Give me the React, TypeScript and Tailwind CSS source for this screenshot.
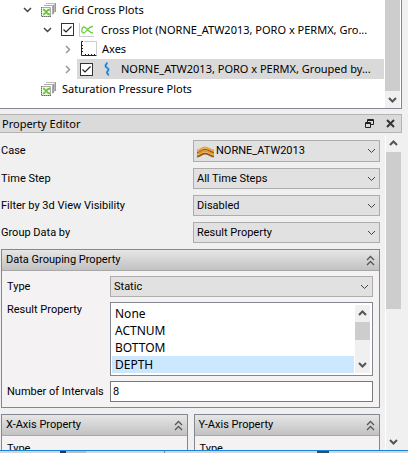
import type { ReactNode } from 'react';

type Dir = 'up' | 'down' | 'right';

function Chevron({ dir, className = '' }: { dir: Dir; className?: string }) {
  const d = dir === 'up' ? 'M1 6 L4.5 2.5 L8 6' : dir === 'down' ? 'M1 3 L4.5 6.5 L8 3' : 'M3 1 L6.5 4.5 L3 8';
  return (
    <svg viewBox="0 0 9 9" className={`h-[9px] w-[9px] shrink-0 ${className}`} fill="none" stroke="currentColor" aria-hidden="true">
      <path d={d} />
    </svg>
  );
}

function PlotsIcon() {
  return (
    <svg viewBox="0 0 16 16" className="h-4 w-4 shrink-0" fill="none" aria-hidden="true">
      <path d="M5 1.500h8.500v9" stroke="#bbb" />
      <path d="M14.500 1v9" stroke="#999" />
      <path d="M3 3.500h8.500v9" stroke="#aaa" />
      <path d="M12.500 3v9" stroke="#999" />
      <path d="M.5 5.500h9v9h-9z" fill="#f2faee" stroke="#aaa" />
      <path d="M.5 5v10M1 14.500h9" stroke="#666" strokeDasharray="1 1" />
      <path d="M2 7.500c3 0 3 5 7 5M2 12.500c3 0 3-5 7-5" stroke="#6cc832" strokeWidth="1.800" />
    </svg>
  );
}

function CrossPlotIcon() {
  return (
    <svg viewBox="0 0 16 16" className="h-4 w-4 shrink-0" fill="none" aria-hidden="true">
      <path d="M.5 1v13.500H15" stroke="#ccc" />
      <path d="M14 4.500C9 4.500 7 11 4.500 11S2.500 5 5 5s5 6 9 6" stroke="#6fce45" strokeWidth="1.300" />
    </svg>
  );
}

function AxesIcon() {
  return (
    <svg viewBox="0 0 16 16" className="h-4 w-4 shrink-0" fill="none" aria-hidden="true">
      <path d="M3 .5h12.500v13" stroke="#ccc" />
      <path d="M2 .5H.5v14h15M1 4.500h1M1 7.500h1M1 10.500h1M4.500 14v-1M7.500 14v-1M10.500 14v-1M13.500 14v-1" stroke="#222" />
    </svg>
  );
}

function CurveIcon() {
  return (
    <svg viewBox="0 0 16 16" className="h-4 w-4 shrink-0" fill="none" aria-hidden="true">
      <path d="M7 1.500c0 2-1.500 2-1.500 3.500S8.500 7 8.500 8.500 7 10 7 11.500s2 1.500 1 3" stroke="#a3cdf0" strokeWidth="3" />
      <path d="M7 1.500c0 2-1.500 2-1.500 3.500S8.500 7 8.500 8.500 7 10 7 11.500s2 1.500 1 3" stroke="#1c79c0" strokeWidth="1.500" />
    </svg>
  );
}

function CaseIcon() {
  return (
    <svg viewBox="0 0 17 12" className="h-3 w-[17px]" fill="none" aria-hidden="true">
      <path d="M0 4.500C4 4.500 4 1.500 8 1.500s5 3 9 3" stroke="#e8a33a" strokeWidth="2" />
      <path d="M0 6.500C4 6.500 4 3.500 8 3.500s5 3 9 3" stroke="#9c5c10" strokeWidth="1.500" />
      <path d="M0 8C4 8 4 5 8 5s5 3 9 3" stroke="#f0941c" strokeWidth="2" />
      <path d="M0 10.500C4 10.500 4 7.500 8 7.500s5 3 9 3" stroke="#965a12" strokeWidth="2" />
    </svg>
  );
}

function Tick({ label }: { label: string }) {
  return (
    <span className="relative flex h-[13px] w-[13px] shrink-0">
      <input type="checkbox" defaultChecked aria-label={label} className="peer h-[13px] w-[13px] appearance-none border border-[#333] bg-white" />
      <svg viewBox="0 0 13 13" className="pointer-events-none invisible absolute inset-0 peer-checked:visible" fill="none" stroke="#222" strokeWidth="1.200" aria-hidden="true">
        <path d="M2.500 6.500l2.500 2.500 5.500-5.500" />
      </svg>
    </span>
  );
}

function Combo({ id, options, icon }: { id: string; options: string[]; icon?: ReactNode }) {
  return (
    <div className="relative flex min-w-0 flex-1">
      {icon && <span className="pointer-events-none absolute top-[6px] left-[4px]">{icon}</span>}
      <select id={id} className={`w-full appearance-none border border-[#adadad] bg-[#e1e1e1] pr-6 ${icon ? 'h-[22px] pl-[22px]' : 'h-[21px] pl-[3px]'}`}>
        {options.map((o) => (
          <option key={o}>{o}</option>
        ))}
      </select>
      <Chevron dir="down" className="pointer-events-none absolute top-[6px] right-1 text-[#444]" />
    </div>
  );
}

function Field({ id, label, options, icon }: { id: string; label: string; options: string[]; icon?: ReactNode }) {
  return (
    <div className="flex items-center">
      <label htmlFor={id} className="w-[193px] shrink-0 pl-px">{label}</label>
      <Combo id={id} options={options} icon={icon} />
    </div>
  );
}

function Group({ title, children, className = '' }: { title: string; children: ReactNode; className?: string }) {
  return (
    <section className={`border border-[#828790] bg-[#f4f2f3] ${className}`}>
      <header className="flex h-[21px] items-center justify-between border-b border-[#a8a8a8] bg-linear-to-b from-[#e6e6e6] to-[#c2c2c2] pr-1 pl-1">
        <h2>{title}</h2>
        <button aria-label={`Collapse ${title}`} className="text-[#555]">
          <svg viewBox="0 0 9 11" className="h-[11px] w-[9px]" fill="none" stroke="currentColor" strokeWidth="1.300" aria-hidden="true">
            <path d="M1 5l3.500-3.500L8 5M1 10l3.500-3.500L8 10" />
          </svg>
        </button>
      </header>
      {children}
    </section>
  );
}

function Row({ indent, expander, children }: { indent: string; expander?: Dir; children: ReactNode }) {
  return (
    <li className={`flex h-5 items-center ${indent}`}>
      <span className="flex w-[18px] shrink-0">
        {expander && <Chevron dir={expander} className={expander === 'down' ? 'stroke-[1.5] text-[#444]' : 'stroke-[1.5] text-[#999]'} />}
      </span>
      {children}
    </li>
  );
}

export default function App() {
  return (
    <div className="flex h-screen flex-col overflow-hidden bg-[#f0f0f0] font-[Roboto,sans-serif] text-[11px] leading-4 whitespace-nowrap text-black">
      <main className="flex min-h-0 flex-1 flex-col overflow-hidden">
        <div className="mr-[6px] flex h-[109px] shrink-0 border-r border-b border-[#828790] bg-white font-['Noto_Sans',sans-serif]">
          <ul className="flex min-w-0 flex-1 flex-col justify-end pr-px pb-[9px]">
            <Row indent="pl-[23px]" expander="down">
              <PlotsIcon />
              <span className="pl-[5px]">Grid Cross Plots</span>
            </Row>
            <Row indent="pl-[43px]" expander="down">
              <Tick label="Cross Plot" />
              <span className="flex w-[27px] shrink-0 pl-[5px]"><CrossPlotIcon /></span>
              <span>Cross Plot (NORNE_ATW2013, PORO x PERMX, Gro...</span>
            </Row>
            <Row indent="pl-[63px]" expander="right">
              <AxesIcon />
              <span className="pl-[5px]">Axes</span>
            </Row>
            <Row indent="pl-[63px]" expander="right">
              <span className="-ml-1 flex h-5 min-w-0 flex-1 items-center bg-[#d9d9d9] pl-[3px]">
                <Tick label="NORNE_ATW2013 curves" />
                <span className="flex w-7 shrink-0 pl-[7px]"><CurveIcon /></span>
                <span>NORNE_ATW2013, PORO x PERMX, Grouped by...</span>
              </span>
            </Row>
            <Row indent="pl-[23px]">
              <PlotsIcon />
              <span className="pl-[5px]">Saturation Pressure Plots</span>
            </Row>
          </ul>
          <div className="mr-px flex w-[15px] shrink-0 flex-col bg-[#f0f0f0]">
            <div className="flex-1 bg-[#cdcdcd]" />
            <button aria-label="Scroll tree down" className="flex h-[17px] items-center justify-center">
              <Chevron dir="down" className="stroke-2 text-[#555]" />
            </button>
          </div>
        </div>

        <header className="mt-[5px] mr-[6px] flex h-[19px] shrink-0 items-center border border-l-0 border-[#b4b4b4] bg-[#dadada] pr-[6px] pl-[2px]">
          <h1 className="flex-1 font-['Noto_Sans',sans-serif]">Property Editor</h1>
          <button aria-label="Float panel" className="mr-3">
            <svg viewBox="0 0 9 9" className="h-[9px] w-[9px]" fill="none" stroke="#222" aria-hidden="true">
              <path d="M2.500 3V.5h6v5H6M3 1.500h5M.5 3.500h5v5h-5zM1 4.500h4" />
            </svg>
          </button>
          <button aria-label="Close panel">
            <svg viewBox="0 0 9 9" className="h-[9px] w-[9px]" stroke="#333" strokeWidth="2" aria-hidden="true">
              <path d="M1 1l7 7M8 1L1 8" />
            </svg>
          </button>
        </header>

        <div className="mt-[2px] flex min-h-0 flex-1">
          <div className="flex min-w-0 flex-1 flex-col gap-[6px] pt-[5px] pr-[5px]">
            <Field id="case" label="Case" options={['NORNE_ATW2013']} icon={<CaseIcon />} />
            <Field id="time" label="Time Step" options={['All Time Steps']} />
            <Field id="filter" label="Filter by 3d View Visibility" options={['Disabled']} />
            <Field id="group" label="Group Data by" options={['Result Property']} />

            <Group title="Data Grouping Property" className="ml-px shrink-0">
              <div className="flex flex-col gap-[5px] py-[5px] pr-[6px] pl-[5px]">
                <div className="flex items-center">
                  <label htmlFor="type" className="w-[103px] shrink-0">Type</label>
                  <Combo id="type" options={['Static']} />
                </div>
                <div className="flex items-start">
                  <label htmlFor="result" className="w-[103px] shrink-0">Result Property</label>
                  <div className="flex h-[74px] min-w-0 flex-1 border border-[#828790] bg-white px-px py-[2px]">
                    <select id="result" size={4} defaultValue="DEPTH" className="h-full min-w-0 flex-1 appearance-none overflow-hidden font-['Noto_Sans',sans-serif] text-[12px]">
                      {['None', 'ACTNUM', 'BOTTOM', 'DEPTH'].map((o) => (
                        <option key={o} className="h-[17px] min-h-0 px-[3px] py-0 leading-[17px] text-black checked:bg-[linear-gradient(#cce8ff,#cce8ff)]">{o}</option>
                      ))}
                    </select>
                    <div className="mx-px flex w-[15px] shrink-0 flex-col bg-[#f0f0f0]">
                      <button aria-label="Scroll list up" className="flex h-[17px] items-center justify-center"><Chevron dir="up" className="stroke-2 text-[#555]" /></button>
                      <div className="h-[18px] bg-[#cdcdcd]" />
                      <div className="flex-1" />
                      <button aria-label="Scroll list down" className="flex h-[17px] items-center justify-center"><Chevron dir="down" className="stroke-2 text-[#555]" /></button>
                    </div>
                  </div>
                </div>
                <div className="flex items-center">
                  <label htmlFor="intervals" className="w-[103px] shrink-0">Number of Intervals</label>
                  <input id="intervals" defaultValue="8" className="h-[21px] min-w-0 flex-1 border border-[#7a7a7a] bg-white px-[2px]" />
                </div>
              </div>
            </Group>

            <div className="ml-px grid shrink-0 grid-cols-2 gap-[6px]">
              {['X', 'Y'].map((axis) => (
                <Group key={axis} title={`${axis}-Axis Property`}>
                  <div className="flex flex-col p-[5px]">
                    <label htmlFor={`type-${axis}`}>Type</label>
                    <Combo id={`type-${axis}`} options={['Static']} />
                  </div>
                </Group>
              ))}
            </div>
          </div>
          <div className="mr-[7px] flex w-4 shrink-0 flex-col border-l border-white">
            <button aria-label="Scroll properties up" className="flex h-[17px] items-center justify-center"><Chevron dir="up" className="stroke-2 text-[#555]" /></button>
            <div className="h-[157px] bg-[#cdcdcd]" />
            <div className="flex-1" />
            <button aria-label="Scroll properties down" className="flex h-[17px] items-center justify-center"><Chevron dir="down" className="stroke-2 text-[#555]" /></button>
          </div>
        </div>
      </main>
      <footer className="flex h-[3px] shrink-0 border-t border-[#1883d7] bg-[#d6d6d6]">
        <span className="ml-[60px] w-[6px] bg-[#1f3864]" />
        <span className="w-5 bg-[#bdbdbd]" />
        <span className="ml-[78px] w-px bg-[#888]" />
        <span className="ml-[152px] w-3 bg-[#2c5064]" />
      </footer>
    </div>
  );
}
